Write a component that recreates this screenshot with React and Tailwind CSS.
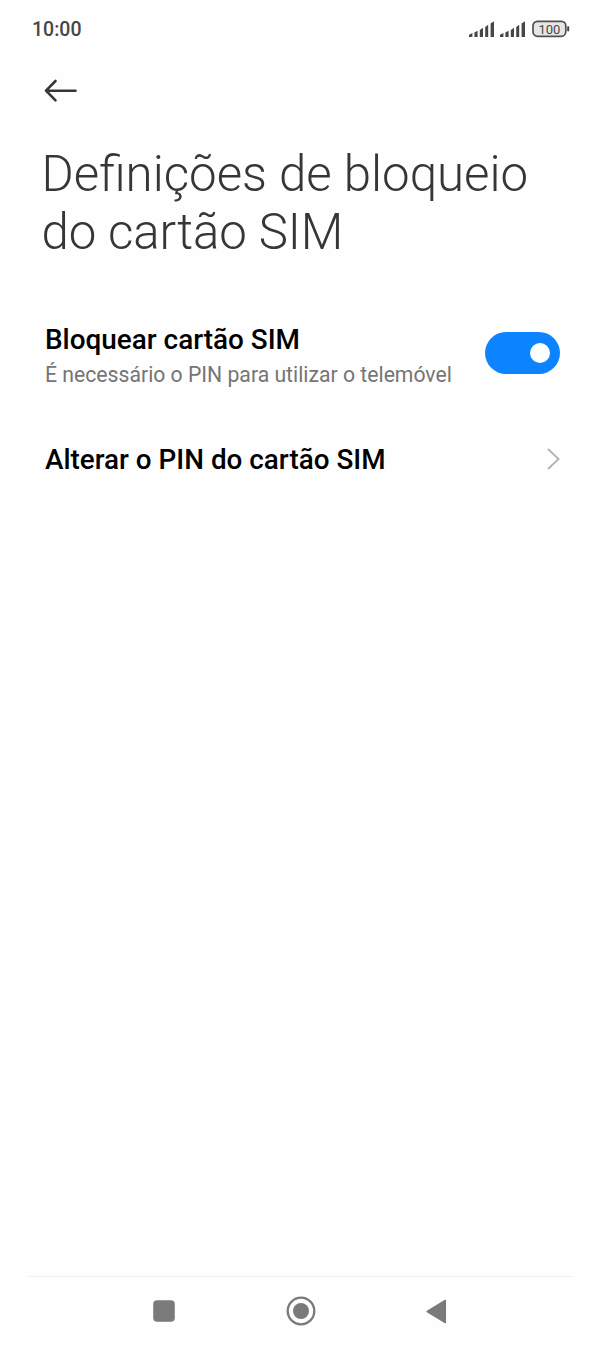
function Signal() {
  return (
    <svg className="h-4 w-[26px]" viewBox="0 0 26 16" fill="#464646">
      <path d="M0 13.8 L3.4 12 V16 H0Z M5.4 11.6 L8.6 9.8 V16 H5.4Z M10.8 9 L14 6.8 V16 H10.8Z M16.2 6 L19.2 3.8 V16 H16.2Z M21.6 2.6 L25 0.3 V16 H21.6Z" />
    </svg>
  );
}

export default function App() {
  return (
    <div className="flex h-[1346px] w-[605px] flex-col bg-[#fefefe] font-['Roboto',sans-serif]">
      <header className="flex h-[58px] items-center justify-between pr-[35px] pl-8">
        <span className="pt-0.5 text-[19.5px] font-medium text-[#464646]">10:00</span>
        <div className="flex items-center">
          <Signal />
          <div className="w-[5px]" />
          <Signal />
          <svg className="ml-1.5 h-[18px] w-[38px]" viewBox="0 0 38 18">
            <rect x="1" y="1.3" width="32.8" height="15" rx="4.5" fill="#e6e6e6" stroke="#505050" strokeWidth="1.7" />
            <rect x="35.2" y="6.2" width="2" height="5.2" rx="0.8" fill="#464646" />
            <text x="17.4" y="14" textAnchor="middle" fontSize="13" fill="#464646">100</text>
          </svg>
        </div>
      </header>
      <div className="flex h-[87px] items-start pt-[21px] pl-[44px]">
        <svg className="h-6 w-[34px]" viewBox="0 0 34 24" fill="none" stroke="#363636" strokeWidth="2.6" strokeLinecap="round" strokeLinejoin="round">
          <path d="M11.5 2 L2 11.7 L11.5 21.4 M2 11.7 H31.5" />
        </svg>
      </div>
      <h1 className="h-[165px] pl-[41.5px] text-[49.2px] leading-[58px] font-light text-[#363636]">Definições de bloqueio<br /><span className="tracking-[-0.1px]">do cartão SIM</span></h1>
      <main className="flex flex-1 flex-col">
        <div className="flex h-[86px] items-center justify-between px-[45px]">
          <div className="pt-1.5">
            <div className="text-[27.9px] leading-[36px] font-medium text-black">Bloquear cartão SIM</div>
            <div className="text-[21.2px] leading-[33px] text-[#757575]">É necessário o PIN para utilizar o telemóvel</div>
          </div>
          <div className="flex h-[42px] w-[75px] items-center justify-end rounded-full bg-[#0d84ff] pr-2.5">
            <span className="size-5 rounded-full bg-white" />
          </div>
        </div>
        <div className="mt-[43px] flex h-10 items-center justify-between px-[45px]">
          <span className="pt-0.5 text-[27.85px] font-medium text-black">Alterar o PIN do cartão SIM</span>
          <svg className="h-[22px] w-[13px]" viewBox="0 0 13 22" fill="none" stroke="#b3b3b3" strokeWidth="1.8"><path d="M1 1 L11.6 11 L1 21" /></svg>
        </div>
      </main>
      <nav className="mr-8 ml-7 flex h-[70px] items-center border-t border-[#f0f0f0] pb-px">
        <svg className="ml-[125px] size-[22px]" viewBox="0 0 22 22"><rect x="0.2" y="0.2" width="21.6" height="21.6" rx="4" fill="#7a7a7a" /></svg>
        <svg className="ml-[110.5px] size-[30px]" viewBox="0 0 30 30"><circle cx="15" cy="15" r="13.3" fill="none" stroke="#7a7a7a" strokeWidth="2.3" /><circle cx="15" cy="15" r="8" fill="#7a7a7a" /></svg>
        <svg className="ml-[110px] h-[25px] w-[21px]" viewBox="0 0 21 25"><path d="M1.2 12.5 L19.3 1.5 V23.5Z" fill="#7a7a7a" stroke="#7a7a7a" strokeWidth="1.5" strokeLinejoin="round" /></svg>
      </nav>
    </div>
  );
}
